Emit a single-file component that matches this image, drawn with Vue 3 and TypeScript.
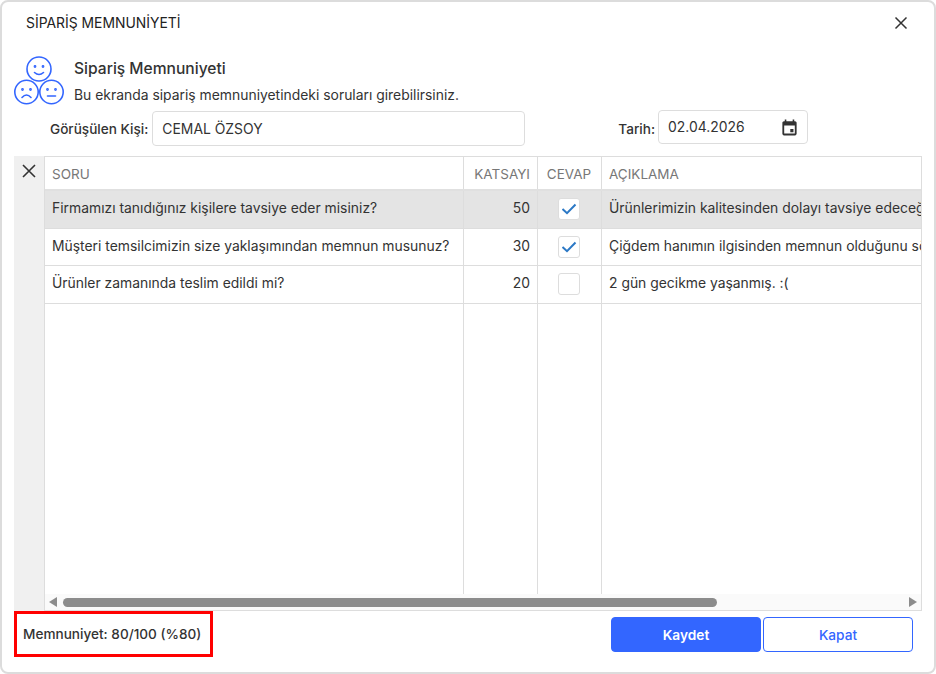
<script setup lang="ts">
interface Row {
  question: string;
  factor: number;
  checked: boolean;
  note: string;
}

const rows: Row[] = [
  {
    question: 'Firmamızı tanıdığınız kişilere tavsiye eder misiniz?',
    factor: 50,
    checked: true,
    note: 'Ürünlerimizin kalitesinden dolayı tavsiye edeceğini söyledi.',
  },
  {
    question: 'Müşteri temsilcimizin size yaklaşımından memnun musunuz?',
    factor: 30,
    checked: true,
    note: 'Çiğdem hanımın ilgisinden memnun olduğunu söyledi.',
  },
  {
    question: 'Ürünler zamanında teslim edildi mi?',
    factor: 20,
    checked: false,
    note: '2 gün gecikme yaşanmış. :(',
  },
];
</script>

<template>
  <div class="dialog">
    <header class="title-bar">
      <span class="title">SİPARİŞ MEMNUNİYETİ</span>
      <svg class="close" width="14" height="14" viewBox="0 0 14 14">
        <path d="M1.5 1.5 L12.5 12.5 M12.5 1.5 L1.5 12.5" stroke="#333" stroke-width="1.5" fill="none" />
      </svg>
    </header>

    <section class="intro">
      <svg class="faces" width="52" height="50" viewBox="0 0 52 50" fill="none" stroke="#3366ff" stroke-width="1.6" stroke-linecap="round">
        <circle cx="27" cy="14" r="12" />
        <circle cx="23" cy="11.5" r="0.6" />
        <circle cx="31" cy="11.5" r="0.6" />
        <path d="M22.5 17.5 Q27 21.5 31.5 17.5" />
        <circle cx="14.5" cy="37" r="11.7" />
        <circle cx="10.5" cy="34.5" r="0.6" />
        <circle cx="18.5" cy="34.5" r="0.6" />
        <path d="M10 42.5 Q14.5 37.5 19 42.5" />
        <circle cx="39.5" cy="37" r="11.7" />
        <circle cx="35.5" cy="34.5" r="0.6" />
        <circle cx="43.5" cy="34.5" r="0.6" />
        <path d="M35.5 41 H43.5" />
      </svg>
      <div class="intro-text">
        <div class="intro-title">Sipariş Memnuniyeti</div>
        <div class="intro-desc">Bu ekranda sipariş memnuniyetindeki soruları girebilirsiniz.</div>
      </div>
    </section>

    <section class="form-row">
      <label class="field-label person-label">Görüşülen Kişi:</label>
      <div class="input person-input">CEMAL ÖZSOY</div>
      <label class="field-label date-label">Tarih:</label>
      <div class="input date-input">
        <span>02.04.2026</span>
        <svg width="19" height="19" viewBox="0 0 24 24">
          <path fill="#333" fill-rule="evenodd" d="M19 4h-1V2h-2v2H8V2H6v2H5c-1.1 0-2 .9-2 2v14c0 1.1.9 2 2 2h14c1.1 0 2-.9 2-2V6c0-1.1-.9-2-2-2zM18.7 19.7H5.3V9.500h13.400zM13 14h4v4h-4z" />
        </svg>
      </div>
    </section>

    <section class="grid-wrap">
      <aside class="gutter">
        <svg width="14" height="14" viewBox="0 0 14 14">
          <path d="M1 1 L13 13 M13 1 L1 13" stroke="#333" stroke-width="1.6" fill="none" />
        </svg>
      </aside>
      <div class="grid-main">
        <div class="grid-body">
          <div class="grid-row head">
            <div class="cell">SORU</div>
            <div class="cell right">KATSAYI</div>
            <div class="cell center">CEVAP</div>
            <div class="cell">AÇIKLAMA</div>
          </div>
          <div v-for="(row, i) in rows" :key="i" class="grid-row data" :class="{ selected: i === 0 }">
            <div class="cell text">{{ row.question }}</div>
            <div class="cell text right">{{ row.factor }}</div>
            <div class="cell center">
              <span class="check">
                <svg v-if="row.checked" width="16" height="12" viewBox="0 0 16 12">
                  <path d="M1.5 6 L6 10.2 L14.5 1.5" stroke="#2b78c5" stroke-width="2" fill="none" />
                </svg>
              </span>
            </div>
            <div class="cell text note">{{ row.note }}</div>
          </div>
          <div class="grid-row filler">
            <div class="cell"></div>
            <div class="cell"></div>
            <div class="cell"></div>
            <div class="cell"></div>
          </div>
        </div>
        <div class="scrollbar">
          <span class="arrow left-arrow"></span>
          <div class="track"><div class="thumb"></div></div>
          <span class="arrow right-arrow"></span>
        </div>
      </div>
    </section>

    <footer class="footer">
      <div class="score">Memnuniyet: 80/100 (%80)</div>
      <div class="actions">
        <button class="btn primary">Kaydet</button>
        <button class="btn outline">Kapat</button>
      </div>
    </footer>
  </div>
</template>

<style>
html, body {
  margin: 0;
  background: #fff;
}
</style>

<style scoped>
.dialog {
  width: 936px;
  height: 674px;
  box-sizing: border-box;
  border: 2px solid #dcdcdc;
  border-radius: 8px;
  background: #fff;
  font-family: Inter, "Noto Sans", sans-serif;
  font-size: 13.9px;
  color: #333;
  overflow: hidden;
  display: flex;
  flex-direction: column;
}

.title-bar {
  height: 42px;
  padding: 0 26px 0 24px;
  display: flex;
  align-items: center;
  justify-content: space-between;
  flex: none;
}

.title {
  font-size: 13.9px;
  color: #222;
}

.intro {
  height: 67px;
  flex: none;
  display: flex;
  padding: 11px 0 0 10px;
  box-sizing: border-box;
}

.intro-text {
  margin-left: 10px;
  padding-top: 4px;
}

.intro-title {
  font-size: 15.6px;
  font-weight: 500;
  line-height: 20px;
}

.intro-desc {
  font-size: 13.9px;
  line-height: 18px;
  margin-top: 7px;
}

.form-row {
  height: 35px;
  flex: none;
  display: flex;
  align-items: center;
  padding-left: 48px;
}

.field-label {
  font-weight: 500;
  font-size: 13.6px;
}

.input {
  box-sizing: border-box;
  border: 1px solid #ddd;
  border-radius: 4px;
  height: 35px;
  display: flex;
  align-items: center;
  padding: 0 8px 0 9px;
  margin-left: 4px;
}

.person-input {
  width: 373px;
}

.date-label {
  margin-left: 93px;
}

.date-input {
  width: 150px;
  height: 34px;
  margin-top: -1px;
  margin-left: 3px;
  align-self: flex-start;
  justify-content: space-between;
}

.grid-wrap {
  margin: 10px 12px 0 12px;
  height: 455px;
  flex: none;
  display: flex;
}

.gutter {
  width: 30px;
  flex: none;
  background: #f0f0f0;
  padding-top: 8px;
  text-align: center;
  box-sizing: border-box;
}

.grid-main {
  flex: 1;
  border: 1px solid #ddd;
  display: flex;
  flex-direction: column;
  min-width: 0;
}

.grid-body {
  flex: 1;
  display: flex;
  flex-direction: column;
  min-height: 0;
}

.grid-row {
  display: grid;
  grid-template-columns: 419px 74px 64px 319px;
}

.cell {
  box-sizing: border-box;
  border-right: 1px solid #ddd;
  padding: 0 7px;
  display: flex;
  align-items: center;
  white-space: nowrap;
  overflow: hidden;
}

.cell:last-child {
  border-right: 0;
}

.cell.text {
  padding-bottom: 2px;
}

.data:nth-child(3) .cell.text {
  padding-bottom: 1px;
}

.cell.right {
  justify-content: flex-end;
}

.cell.center {
  justify-content: center;
  padding: 0 1px 0 0;
}

.head {
  height: 34px;
  border-bottom: 2px solid #e0e0e0;
  box-sizing: border-box;
  color: #777;
  font-size: 13.5px;
}

.head .cell {
  padding-top: 1px;
}

.data {
  height: 37.5px;
  border-bottom: 1px solid #ddd;
  box-sizing: border-box;
}

.data.selected {
  background: #e4e4e4;
}

.filler {
  flex: 1;
}

.check {
  box-sizing: border-box;
  width: 22px;
  height: 22px;
  background: #fff;
  border: 1px solid #ddd;
  border-radius: 3px;
  display: flex;
  align-items: center;
  justify-content: center;
}

.scrollbar {
  height: 16px;
  flex: none;
  background: #fafafa;
  display: flex;
  align-items: center;
  padding: 0 4px;
}

.arrow {
  width: 0;
  height: 0;
  border-top: 5px solid transparent;
  border-bottom: 5px solid transparent;
  flex: none;
}

.left-arrow {
  border-right: 8px solid #8c8c8c;
}

.right-arrow {
  border-left: 8px solid #8c8c8c;
}

.track {
  flex: 1;
  padding: 0 6px;
}

.thumb {
  width: 654px;
  height: 9px;
  border-radius: 5px;
  background: #8c8c8c;
}

.footer {
  flex: 1;
  display: flex;
  align-items: flex-start;
  justify-content: space-between;
  padding: 0 21px 0 12px;
}

.score {
  box-sizing: border-box;
  width: 199px;
  height: 46px;
  border: 3px solid #f00;
  display: flex;
  align-items: center;
  padding-left: 6px;
  font-size: 13.6px;
  font-weight: 500;
}

.actions {
  display: flex;
  gap: 2px;
  padding-top: 6px;
}

.btn {
  box-sizing: border-box;
  width: 150px;
  height: 35px;
  border-radius: 4px;
  border: 1px solid #3366ff;
  font-family: inherit;
  font-size: 13.7px;
  font-weight: 600;
}

.primary {
  background: #3366ff;
  color: #fff;
}

.outline {
  background: #fff;
  color: #3366ff;
  font-weight: 500;
}
</style>
